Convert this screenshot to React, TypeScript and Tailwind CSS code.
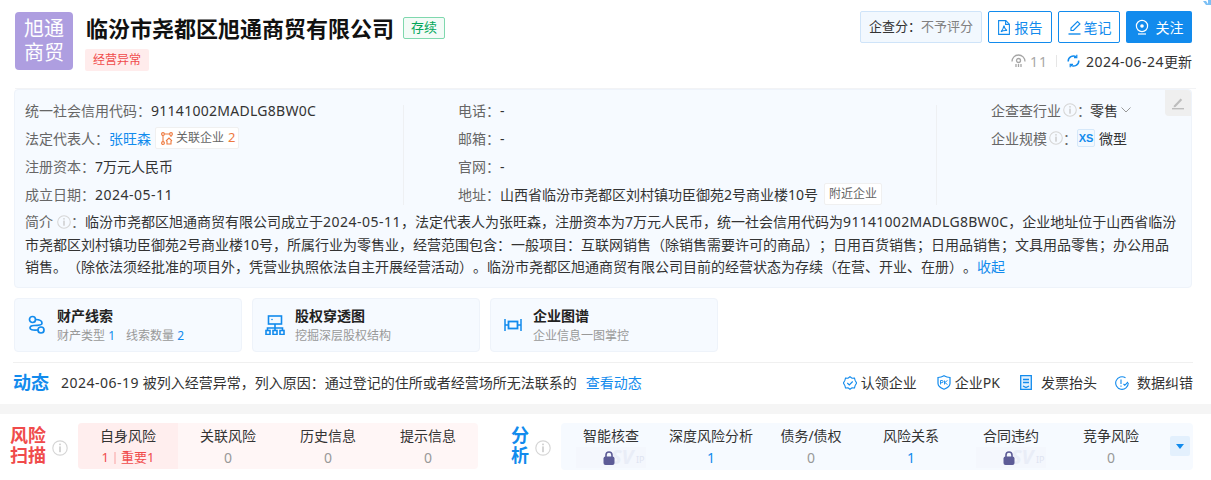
const InfoDot = ({ size = 14, className = "inline-block flex-none" }: { size?: number; className?: string }) => (
  <svg width={size} height={size} viewBox="0 0 16 16" fill="none" className={className}>
    <circle cx="8" cy="8" r="7.2" stroke="#d6d6d6" strokeWidth="1.2" />
    <rect x="7.3" y="3.6" width="1.4" height="1.6" fill="#c4c4c4" />
    <rect x="7.3" y="6.4" width="1.4" height="5.8" fill="#c4c4c4" />
  </svg>
);

const Row = ({ label, children }: { label: string; children: React.ReactNode }) => (
  <div className="flex h-[28px] items-center whitespace-nowrap">
    <span className="text-[#666]">{label}：</span>
    {children}
  </div>
);

const Lock = () => (
  <div className="relative flex h-[21px] w-[70px] items-center justify-center bg-[#f4f7fd]">
    <span className="absolute left-[35px] top-[-2px] text-[20px] font-bold italic leading-[24px] text-[#e9edf7]">SV</span>
    <span className="absolute left-[60px] top-[7px] text-[9px] leading-[12px] text-[#dfe4f1]">IP</span>
    <svg width="12" height="14" viewBox="0 0 12 14" className="relative mr-[5px]">
      <path d="M3 6V4a3 3 0 0 1 6 0v2" fill="none" stroke="#5d5c97" strokeWidth="1.6" />
      <rect x="0.5" y="5.500" width="11" height="8.500" rx="2" fill="#5d5c97" />
    </svg>
  </div>
);

const riskTabs = [
  { name: "关联风险", value: "0" },
  { name: "历史信息", value: "0" },
  { name: "提示信息", value: "0" },
];

const Cell = ({ name, children }: { name: string; children: React.ReactNode }) => (
  <div className="flex w-[100px] flex-none flex-col items-center pt-[2px]">
    <div className="h-[21px] text-[14px] leading-[21px] text-[#333]">{name}</div>
    <div className="mt-[1px] flex h-[21px] items-center text-[14px] leading-[21px]">{children}</div>
  </div>
);

const Card = ({ icon, title, children }: { icon: React.ReactNode; title: string; children: React.ReactNode }) => (
  <div className="flex h-[54px] w-[228px] flex-none items-center rounded-[4px] border border-[#eef3fa] bg-[#f6faff] pl-[12px]">
    <div className="flex w-[20px] flex-none justify-center">{icon}</div>
    <div className="ml-[10px]">
      <div className="text-[14px] font-bold leading-[20px] text-[#222]">{title}</div>
      <div className="mt-[1px] text-[12px] leading-[18px] text-[#999]">{children}</div>
    </div>
  </div>
);

const Action = ({ icon, label, gap }: { icon: React.ReactNode; label: string; gap: string }) => (
  <div className={`flex items-center ${gap}`}>
    {icon}
    <span className="text-[14px] text-[#333]">{label}</span>
  </div>
);

export default function App() {
  return (
    <div className="relative h-[480px] w-[1211px] overflow-hidden bg-white font-['Noto_Sans','Noto_Sans_CJK_SC',sans-serif] text-[14px] text-[#333] [text-spacing-trim:space-all]">
      <svg className="absolute right-0 top-0" width="8" height="6" viewBox="0 0 8 6" fill="#7cc0f5">
        <path d="M0 1h3l2 3V0h3v5H3z" />
      </svg>

      {/* header */}
      <div className="mx-[15px] flex h-[89px] justify-between border-b border-[#f2f3f5] pt-[11px]">
        <div className="flex">
          <div className="mt-px flex h-[58px] w-[58px] flex-none items-center justify-center rounded-[4px] bg-[#ae9ee0] text-center text-[20px] leading-[24px] text-white">
            旭通
            <br />
            商贸
          </div>
          <div className="ml-[12px]">
            <div className="flex h-[34px] items-center pl-px">
              <h1 className="text-[22px] font-bold leading-[34px] text-[#111]">临汾市尧都区旭通商贸有限公司</h1>
              <span className="ml-[9px] flex h-[22px] w-[42px] items-center justify-center rounded-[2px] border border-[#7fd8ae] bg-[#f3fbf7] text-[13px] text-[#00a65a]">
                存续
              </span>
            </div>
            <div className="mt-[4px] flex h-[22px] w-[64px] items-center justify-center rounded-[2px] bg-[#ffecec] text-[12px] text-[#f04b4b]">
              经营异常
            </div>
          </div>
        </div>
        <div className="mr-[4px] flex flex-col items-end">
          <div className="flex h-[32px] gap-[6px]">
            <div className="flex w-[122px] items-center justify-center rounded-[2px] border border-[#cfe4f9] bg-[#f2f8fe] text-[13px] text-[#333]">
              企查分：<span className="text-[#808080]">不予评分</span>
            </div>
            <div className="flex w-[64px] items-center justify-center gap-[5px] rounded-[2px] border border-[#128bed] text-[#128bed]">
              <svg width="12" height="15" viewBox="0 0 12 15" fill="none" stroke="#128bed" strokeWidth="1.1">
                <path d="M.6.6h7.2l3.6 3.6v10.2H.6z" />
                <path d="M7.6.8v3.6h3.6M6 5.5c.4 3 1.2 4 3 5-2-.2-4.3 0-6 1.2 1.5-1.8 2.6-3.8 3-6.2z" />
              </svg>
              <span className="text-[14px]">报告</span>
            </div>
            <div className="flex w-[62px] items-center justify-center gap-[1px] rounded-[2px] border border-[#128bed] text-[#128bed]">
              <svg width="16" height="15" viewBox="0 0 16 15" fill="none" stroke="#128bed" strokeWidth="1.2">
                <path d="M4 10.5V8l6.5-6.5 2.4 2.4L6.4 10.5z" />
                <path d="M1.5 14h12" strokeWidth="1.4" />
              </svg>
              <span className="text-[14px]">笔记</span>
            </div>
            <div className="flex w-[66px] items-center justify-center gap-[7px] rounded-[2px] bg-[#128bed] text-white">
              <svg width="14" height="16" viewBox="0 0 14 16" fill="none" stroke="white" strokeWidth="1.2">
                <circle cx="7" cy="7" r="5.6" />
                <circle cx="7" cy="7" r="1.8" fill="white" stroke="none" />
                <path d="M3 15h8" />
              </svg>
              <span className="text-[14px]">关注</span>
            </div>
          </div>
          <div className="mt-[7px] flex h-[22px] items-center text-[14px]">
            <svg width="15" height="14" viewBox="0 0 15 14" fill="none" stroke="#a6a6a6" strokeWidth="1.3">
              <path d="M1 7.5a6.5 6.5 0 0 1 13 0" />
              <circle cx="7.5" cy="6.5" r="2" />
              <path d="M5 13V10M7.5 13V10M10 13V10" />
            </svg>
            <span className="ml-[4px] tracking-[1px] text-[#a8a8a8]">11</span>
            <span className="ml-[8px] h-[12px] w-px bg-[#e6e6e6]" />
            <svg className="ml-[10px]" width="13" height="14" viewBox="0 0 13 14" fill="none" stroke="#128bed" strokeWidth="1.5">
              <path d="M1.2 7.5A5.2 5.2 0 0 1 9.4 3M11.8 6.5A5.2 5.2 0 0 1 3.6 11" />
              <path d="M9.8.8v2.8H7M3.2 13.2v-2.8H6" strokeWidth="1.2" />
            </svg>
            <span className="ml-[6px] text-[#333]">
              <span className="tracking-[0.5px]">2024-06-24</span>更新
            </span>
          </div>
        </div>
      </div>

      {/* info panel */}
      <div className="relative ml-[14px] mr-[19px] h-[199px] rounded-[4px] border border-[#eef3fa] bg-[#f6faff] pl-[10px] pr-[9px] pt-[6px]">
        <div className="absolute right-0 top-0 flex h-[26px] w-[26px] items-center justify-center rounded-bl-[4px] rounded-tr-[4px] bg-[#efefef]">
          <svg width="14" height="14" viewBox="0 0 14 14" fill="#bdbdbd">
            <path d="M3 9.5 9.6 2.6l1.6 1.5-6.7 6.8-1.9.3z" />
            <rect x="1" y="12" width="12" height="1.4" />
          </svg>
        </div>
        <div className="flex h-[113px]">
          <div className="w-[378px] flex-none">
            <Row label="统一社会信用代码">
              <span className="tracking-[0.28px]">91141002MADLG8BW0C</span>
            </Row>
            <Row label="法定代表人">
              <span className="text-[#128bed]">张旺森</span>
              <span className="ml-[4px] flex h-[22px] w-[84px] items-center rounded-[2px] border border-[#f0f0f0] bg-white pl-[5px] text-[12px] text-[#666]">
                <svg width="12" height="13" viewBox="0 0 12 13" fill="none" stroke="#ee7a3f" strokeWidth="1.1">
                  <circle cx="2" cy="2" r="1.4" />
                  <circle cx="10" cy="2" r="1.4" />
                  <circle cx="2" cy="11" r="1.4" />
                  <path d="M3.5 2h5M2 3.5v6M10 3.5V5M5 9l3-3 3 3M6 9v3h4V9" />
                </svg>
                <span className="ml-[3px]">关联企业</span>
                <span className="ml-[4px] text-[13px] text-[#ee7a3f]">2</span>
              </span>
            </Row>
            <Row label="注册资本">
              <span>7万元人民币</span>
            </Row>
            <Row label="成立日期">
              <span className="tracking-[0.5px]">2024-05-11</span>
            </Row>
          </div>
          <div className="mt-[9px] h-[100px] w-px flex-none bg-[#eef0f3]" />
          <div className="w-[532px] flex-none pl-[54px]">
            <Row label="电话">
              <span>-</span>
            </Row>
            <Row label="邮箱">
              <span>-</span>
            </Row>
            <Row label="官网">
              <span>-</span>
            </Row>
            <Row label="地址">
              <span>山西省临汾市尧都区刘村镇功臣御苑2号商业楼10号</span>
              <span className="ml-[6px] flex h-[22px] w-[58px] items-center justify-center rounded-[2px] border border-[#f0f0f0] bg-white text-[12px] text-[#666]">
                附近企业
              </span>
            </Row>
          </div>
          <div className="mt-[9px] h-[100px] w-px flex-none bg-[#eef0f3]" />
          <div className="pl-[54px]">
            <div className="flex h-[28px] items-center whitespace-nowrap">
              <span className="text-[#666]">企查查行业</span>
              <InfoDot className="ml-[2px] inline-block flex-none" />
              <span className="text-[#666]">：</span>
              <span className="-ml-px">零售</span>
              <svg className="ml-[3px]" width="10" height="6" viewBox="0 0 10 6" fill="none" stroke="#999">
                <path d="M.5.5 5 5 9.5.5" />
              </svg>
            </div>
            <div className="flex h-[28px] items-center whitespace-nowrap">
              <span className="text-[#666]">企业规模</span>
              <InfoDot className="ml-[2px] inline-block flex-none" />
              <span className="text-[#666]">：</span>
              <span className="flex h-[18px] w-[18px] items-center justify-center rounded-[2px] border border-[#d5e8fa] bg-[#f2f8fe] font-['Liberation_Sans',sans-serif] text-[11px] font-bold text-[#128bed]">
                XS
              </span>
              <span className="ml-[4px]">微型</span>
            </div>
          </div>
        </div>
        <div className="mt-[2px] whitespace-nowrap text-[14px] leading-[22.5px] text-[#333]">
          <div className="flex h-[22.5px] items-center">
            <span className="text-[#666]">简介</span>
            <InfoDot className="ml-[4px] block flex-none" />
            <span className="text-[#666]">：</span>
            <span>临汾市尧都区旭通商贸有限公司成立于</span>
            <span className="tracking-[0.5px]">2024-05-11</span>
            <span>，法定代表人为张旺森，注册资本为7万元人民币，统一社会信用代码为</span>
            <span className="tracking-[0.28px]">91141002MADLG8BW0C</span>
            <span>，企业地址位于山西省临汾</span>
          </div>
          <div className="h-[22.5px]">
            市尧都区刘村镇功臣御苑2号商业楼10号，所属行业为零售业，经营范围包含：一般项目：互联网销售（除销售需要许可的商品）；日用百货销售；日用品销售；文具用品零售；办公用品
          </div>
          <div className="flex h-[22.5px] items-center">
            <span>销售。（除依法须经批准的项目外，凭营业执照依法自主开展经营活动）。临汾市尧都区旭通商贸有限公司目前的经营状态为存续（在营、开业、在册）。</span>
            <span className="text-[#128bed]">收起</span>
          </div>
        </div>
      </div>

      {/* cards */}
      <div className="ml-[14px] mt-[10px] flex gap-[10px]">
        <Card
          title="财产线索"
          icon={
            <svg width="18" height="20" viewBox="0 0 18 20" fill="none" stroke="#128bed" strokeWidth="1.7">
              <circle cx="4.5" cy="4.5" r="3" />
              <circle cx="13" cy="15" r="3" />
              <path d="M7.5 4.5c4 0 6.5 1.5 6.5 3.7S10 10.500 6 10.500c-3 0-4 1.300-4 2.500 0 1.600 2 2.500 8 2" />
            </svg>
          }
        >
          财产类型 <span className="text-[#128bed]">1</span>
          <span className="ml-[11px]">线索数量</span> <span className="text-[#128bed]">2</span>
        </Card>
        <Card
          title="股权穿透图"
          icon={
            <svg width="20" height="20" viewBox="0 0 20 20" fill="none" stroke="#128bed" strokeWidth="1.6">
              <rect x="3.500" y="1" width="13" height="8" />
              <path d="M10 9v4M2.500 16v-3h15v3M10 13v3" />
              <rect x="1" y="15.500" width="4" height="4" />
              <rect x="8" y="15.500" width="4" height="4" />
              <rect x="15" y="15.500" width="4" height="4" />
              <circle cx="7" cy="4.500" r="0.800" fill="#128bed" stroke="none" />
            </svg>
          }
        >
          挖掘深层股权结构
        </Card>
        <Card
          title="企业图谱"
          icon={
            <svg width="18" height="14" viewBox="0 0 18 14" fill="none" stroke="#128bed" strokeWidth="1.5">
              <path d="M1 1v12M17 1v12M1 7h3M14 7h3" />
              <rect x="4.500" y="3.500" width="9" height="7" strokeWidth="1.800" />
            </svg>
          }
        >
          企业信息一图掌控
        </Card>
      </div>

      {/* dynamic row */}
      <div className="mx-[13px] mr-[18px] mt-[10px] flex h-[42px] items-center border-t border-[#f0f0f0] pb-[2px]">
        <span className="text-[18px] font-bold text-[#128bed]">动态</span>
        <span className="ml-[12px] text-[14px] text-[#333]">
          <span className="tracking-[0.5px]">2024-06-19</span> 被列入经营异常，列入原因：通过登记的住所或者经营场所无法联系的
        </span>
        <span className="ml-[9px] text-[14px] text-[#128bed]">查看动态</span>
        <div className="ml-auto flex items-center gap-[20px]">
          <Action
            gap="gap-[4px]"
            label="认领企业"
            icon={
              <svg width="14" height="14" viewBox="0 0 14 14" fill="none" stroke="#128bed" strokeWidth="1.1">
                <path d="M7 .7 9 2.200l2.500-.2.600 2.400 1.500 2.600-1.500 2.600-.6 2.400-2.500-.2L7 13.300l-2-1.500-2.500.2-.6-2.400L.4 7l1.500-2.600.6-2.400 2.500.2z" />
                <path d="m4.300 7 2 2 3.400-3.500" />
              </svg>
            }
          />
          <Action
            gap="gap-[4px]"
            label="企业PK"
            icon={
              <svg width="14" height="15" viewBox="0 0 14 15" fill="none" stroke="#128bed" strokeWidth="1.2">
                <path d="M1 2.500C3 2.500 5 2 7 .8c2 1.200 4 1.700 6 1.700v6c0 2.500-3 4.500-6 5.700-3-1.200-6-3.200-6-5.700z" />
                <path d="M3.500 9.500v-4h1.500a1 1 0 0 1 0 2.200H3.500M7.500 5.500v4M10.500 5.500 7.700 7.500l2.800 2" strokeWidth="0.900" />
              </svg>
            }
          />
          <Action
            gap="gap-[9px]"
            label="发票抬头"
            icon={
              <svg width="12" height="15" viewBox="0 0 12 15" fill="none" stroke="#128bed" strokeWidth="1.3">
                <path d="M.7.7h10.600v13.600H.7z" fill="#e3f1fd" />
                <path d="M3 4.500h6M3 7.500h6M3 11l3 1.500L9 11" />
              </svg>
            }
          />
          <div className="-ml-[2px]">
            <Action
              gap="gap-[8px]"
              label="数据纠错"
              icon={
                <svg width="14" height="14" viewBox="0 0 14 14" fill="none" stroke="#128bed" strokeWidth="1.1">
                  <path d="M10.500 1.800A6.300 6.300 0 1 0 13.300 7" />
                  <path d="M6 3.500v4.500M6 9.500v1.200M8.500 8l1.300 1.300L13 6" />
                </svg>
              }
            />
          </div>
        </div>
      </div>

      <div className="h-[10px] bg-[#f5f5f5]" />

      {/* risk scan */}
      <div className="flex h-[66px] items-start pt-[9px]">
        <div className="ml-[10px] mt-[2px] w-[36px] text-[18px] font-bold leading-[20px] text-[#f04b4b]">风险扫描</div>
        <div className="ml-[6px] mt-[13px]">
          <InfoDot size={16} />
        </div>
        <div className="ml-[10px] flex h-[46px] w-[400px] flex-none overflow-hidden rounded-[4px] bg-[#fff6f6]">
          <div className="bg-[#ffeeee]">
            <Cell name="自身风险">
              <span className="text-[13px] text-[#f04b4b]">1</span>
              <span className="mx-[5px] h-[12px] w-[2px] bg-[#fcc8c8]" />
              <span className="text-[13px] text-[#f04b4b]">重要1</span>
            </Cell>
          </div>
          {riskTabs.map((tab) => (
            <Cell key={tab.name} name={tab.name}>
              <span className="text-[#999]">{tab.value}</span>
            </Cell>
          ))}
        </div>

        <div className="ml-[33px] mt-[2px] w-[20px] text-[18px] font-bold leading-[20px] text-[#128bed]">分析</div>
        <div className="ml-[4px] mt-[13px]">
          <InfoDot size={16} />
        </div>
        <div className="ml-[10px] flex h-[47px] w-[632px] flex-none rounded-[4px] bg-[#f6faff]">
          <Cell name="智能核查">
            <Lock />
          </Cell>
          <Cell name="深度风险分析">
            <span className="text-[#128bed]">1</span>
          </Cell>
          <Cell name="债务/债权">
            <span className="text-[#999]">0</span>
          </Cell>
          <Cell name="风险关系">
            <span className="text-[#128bed]">1</span>
          </Cell>
          <Cell name="合同违约">
            <Lock />
          </Cell>
          <Cell name="竞争风险">
            <span className="text-[#999]">0</span>
          </Cell>
          <div className="ml-[9px] mt-[13px] flex h-[20px] w-[20px] items-center justify-center rounded-[2px] bg-[#e3f0fd]">
            <svg width="8" height="5" viewBox="0 0 8 5" fill="#128bed">
              <path d="M0 0h8L4 5z" />
            </svg>
          </div>
        </div>
      </div>
    </div>
  );
}
